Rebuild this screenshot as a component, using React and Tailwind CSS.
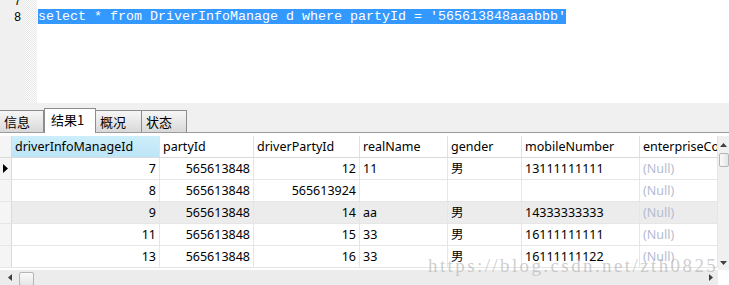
import React from "react";

const columns = [
  { name: "driverInfoManageId", width: "w-[148px]", right: true },
  { name: "partyId", width: "w-[94px]", right: true },
  { name: "driverPartyId", width: "w-[106px]", right: true },
  { name: "realName", width: "w-[88px]" },
  { name: "gender", width: "w-[74px]" },
  { name: "mobileNumber", width: "w-[118px]" },
  { name: "enterpriseCo", width: "w-[78px]" },
];

const rows = [
  ["7", "565613848", "12", "11", "男", "13111111111", null],
  ["8", "565613848", "565613924", "", "", "", null],
  ["9", "565613848", "14", "aa", "男", "14333333333", null],
  ["11", "565613848", "15", "33", "男", "16111111111", null],
  ["13", "565613848", "16", "33", "男", "16111111122", null],
];

const tabs = [
  { label: "信息", width: "w-[44px]" },
  { label: "结果1", width: "w-[52px]", active: true },
  { label: "概况", width: "w-[46px]" },
  { label: "状态", width: "w-[45px]" },
];

const Arrow = ({ dir, className }) => {
  const pts = {
    up: "0,5 5,0 10,5",
    down: "0,0 10,0 5,5",
    left: "5,0 5,10 0,5",
    right: "0,0 0,10 5,5",
  }[dir];
  const size = dir === "up" || dir === "down" ? "w-[7px] h-[4px]" : "w-[4px] h-[7px]";
  const box = dir === "up" || dir === "down" ? "0 0 10 5" : "0 0 5 10";
  return (
    <svg viewBox={box} preserveAspectRatio="none" className={`${size} ${className || ""}`}>
      <polygon points={pts} fill="#404040" />
    </svg>
  );
};

const Editor = () => (
  <div className="h-[103px] flex overflow-hidden">
    <div className="w-[25px] bg-[#f0f0f0] font-['Liberation_Sans',sans-serif] text-[12px] text-right pr-[4px] leading-[16px] text-black -mt-[7px]">
      <div>7</div>
      <div>8</div>
    </div>
    <div className="w-[12px] bg-[repeating-conic-gradient(#e6e6e6_0%_25%,#ffffff_0%_50%)] bg-[length:2px_2px]" />
    <div className="flex-1 pl-[1px] -mt-[7px] font-['Liberation_Mono',monospace] text-[13.33px] leading-[16px] whitespace-pre">
      <div>&nbsp;</div>
      <div>
        <span className="bg-[#3399ff] text-white">
          select * from DriverInfoManage d where partyId = '565613848aaabbb'
        </span>
      </div>
    </div>
  </div>
);

const TabBar = () => (
  <div className="h-[30px] bg-[#f0f0f0] border-b border-[#9c9c9c] flex items-end font-['Noto_Sans_CJK_SC',sans-serif] text-[13px] text-black">
    {tabs.map((t) =>
      t.active ? (
        <div
          key={t.label}
          className={`${t.width} h-[25px] -mb-[1px] bg-white border border-b-0 border-[#8c8c8c] pl-[6px] leading-[22px]`}
        >
          {t.label}
        </div>
      ) : (
        <div
          key={t.label}
          className={`${t.width} h-[22px] bg-gradient-to-b from-[#f6f6f6] to-[#d9d9d9] border-r border-t border-[#8c8c8c] pl-[4px] leading-[22px]`}
        >
          {t.label}
        </div>
      )
    )}
  </div>
);

const Grid = () => (
  <div className="flex font-['Noto_Sans','Noto_Sans_CJK_SC',sans-serif] text-[12.5px] text-black">
    <div className="w-[718px] pt-[3px] overflow-hidden">
      <div className="flex h-[22px] border-b border-[#dadada]">
        <div className="w-[12px] bg-[#f5f5f5] border-r border-[#dadada]" />
        {columns.map((c, i) => (
          <div
            key={c.name}
            className={`${c.width} shrink-0 px-[3px] leading-[21px] whitespace-nowrap overflow-hidden border-r border-[#e2e2e2] ${
              i === 0 ? "bg-gradient-to-b from-[#cdeefb] to-[#bde5f6]" : "bg-white"
            }`}
          >
            {c.name}
          </div>
        ))}
      </div>
      {rows.map((r, ri) => (
        <div
          key={ri}
          className={`flex h-[22px] border-b border-[#e6e6e6] ${ri === 2 ? "bg-[#ececec]" : "bg-white"}`}
        >
          <div className="w-[12px] bg-[#f5f5f5] border-r border-[#dadada] flex items-center pl-[3px]">
            {ri === 0 && (
              <svg viewBox="0 0 5 9" className="w-[5px] h-[9px]">
                <polygon points="0,0 5,4.5 0,9" fill="#000" />
              </svg>
            )}
          </div>
          {columns.map((c, ci) => (
            <div
              key={c.name}
              className={`${c.width} shrink-0 px-[3px] leading-[21px] whitespace-nowrap overflow-hidden border-r border-[#e6e6e6] ${
                c.right ? "text-right" : ""
              }`}
            >
              {r[ci] === null ? <span className="text-[#b4bcd2]">(Null)</span> : r[ci]}
            </div>
          ))}
        </div>
      ))}
      <div className="h-[2px] bg-white" />
      <div className="h-[15px] bg-[#ececec] flex items-start">
        <div className="w-[19px] h-[15px] flex items-center justify-center">
          <Arrow dir="left" />
        </div>
        <div className="w-[15px] h-[14px] mt-[2px] bg-gradient-to-b from-[#fafafa] to-[#e6e6e6] border border-[#b5b5b5] rounded-[2px]" />
        <div className="flex-1" />
        <div className="w-[14px] h-[15px] flex items-center justify-center">
          <Arrow dir="right" />
        </div>
      </div>
    </div>
    <div className="w-[11px] mt-[3px] h-[134px] bg-[#f0f0f0] flex flex-col items-center">
      <div className="h-[17px] flex items-center justify-center">
        <Arrow dir="up" />
      </div>
      <div className="w-[10px] h-[14px] ml-[1px] bg-gradient-to-r from-[#fafafa] to-[#e6e6e6] border border-[#b5b5b5] rounded-[2px]" />
      <div className="flex-1" />
      <div className="h-[14px] flex items-center justify-center">
        <Arrow dir="down" />
      </div>
    </div>
  </div>
);

export default function App() {
  return (
    <div className="relative w-[729px] h-[285px] overflow-hidden bg-white">
      <Editor />
      <TabBar />
      <Grid />
      <div className="absolute left-[428px] top-[252px] font-['Liberation_Serif',serif] text-[19px] tracking-[2.4px] text-[#b8b8b8]/70 whitespace-nowrap pointer-events-none">
        https://blog.csdn.net/zth0825
      </div>
    </div>
  );
}
